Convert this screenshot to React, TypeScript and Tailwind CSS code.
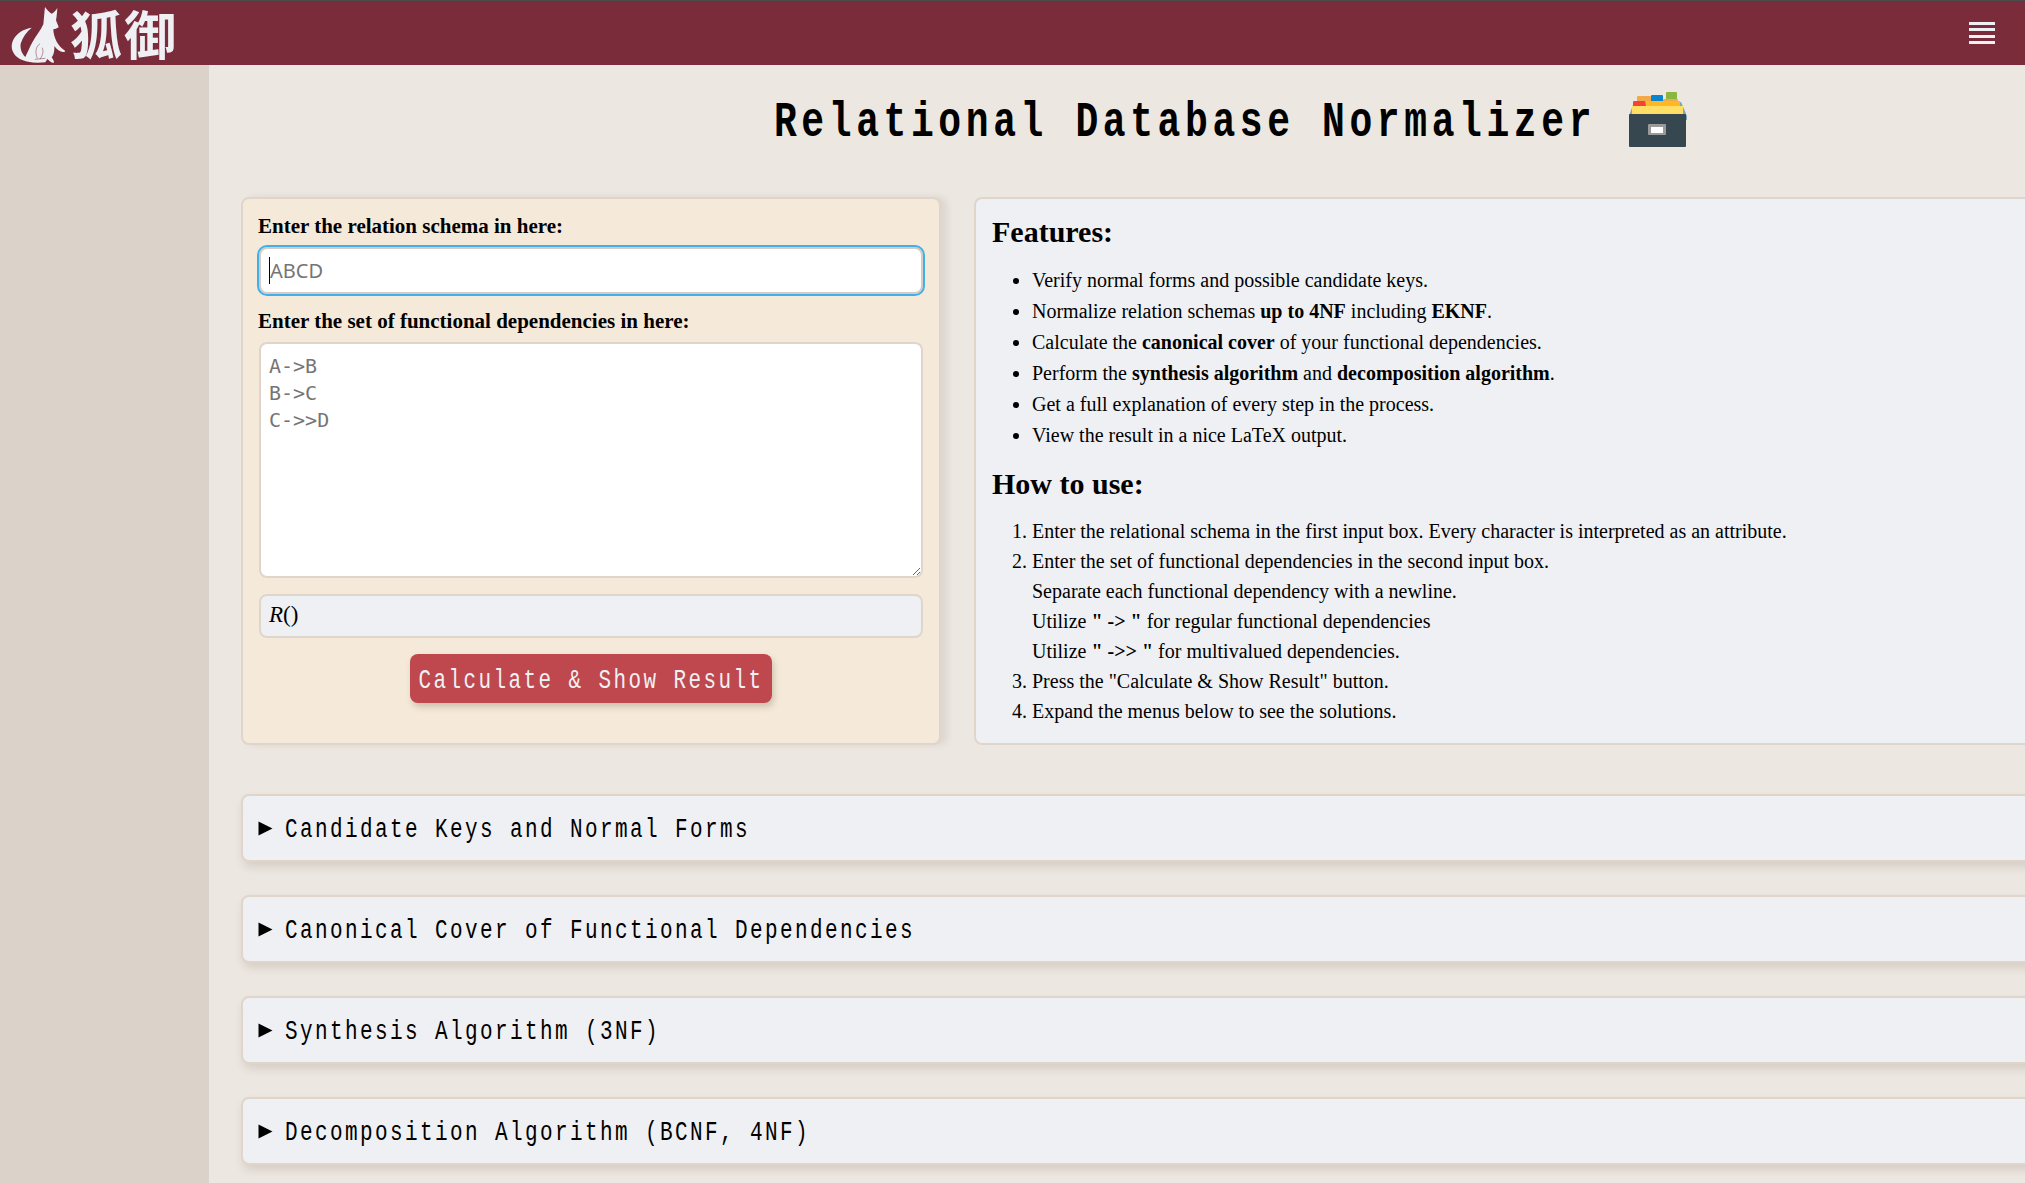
import React from 'react';

const serif = 'font-["Liberation_Serif",serif]';
const hand = 'font-["Liberation_Mono",monospace]';

const sections = [
  'Candidate Keys and Normal Forms',
  'Canonical Cover of Functional Dependencies',
  'Synthesis Algorithm (3NF)',
  'Decomposition Algorithm (BCNF, 4NF)',
];

function Fox() {
  return (
    <svg width="66" height="64" viewBox="0 0 198 192" className="shrink-0">
      <path
        fill="#eff0f4"
        d="M135 18 C142 28 148 34 155 38 C162 34 168 28 172 20 C171 36 170 48 168 58 C171 66 174 72 176 79 C170 83 165 84 160 85 C160 96 163 108 170 122 C176 132 184 142 195 149 C196 152 193 154 188 153 C178 151 170 145 163 135 C164 150 160 165 155 168 C158 174 162 178 162 185 C154 186 148 180 142 174 L136 184 C118 186 100 186 84 182 C60 178 42 166 36 145 C32 125 42 105 62 92 C72 86 84 81 95 80 C80 92 68 108 62 128 C60 144 66 158 76 168 C82 156 88 140 98 122 C108 104 122 88 130 70 C132 52 133 34 135 18 Z"
      />
      <path fill="none" stroke="#7b2c3b" strokeWidth="1.5" d="M120 128 C108 136 104 152 112 172 M126 140 C132 150 128 164 120 174 M104 175 L136 172" />
    </svg>
  );
}

function FileBox() {
  return (
    <svg width="60" height="56" viewBox="0 0 60 56" className="shrink-0">
      <path fill="#78a7b5" d="M6 10 H53 L59 24 V28 H1 V24 Z" />
      <rect x="9" y="4" width="14" height="8" rx="1" fill="#f2a94a" />
      <rect x="23" y="3" width="12" height="8" rx="1" fill="#0b84d0" />
      <rect x="38" y="0" width="11" height="8" rx="1" fill="#8bb63f" />
      <rect x="35" y="7" width="15" height="6" rx="1" fill="#f2a94a" />
      <rect x="5" y="9" width="13" height="9" rx="1" fill="#f44336" />
      <path fill="#ffb627" d="M17 9 H52 V18 H5 V14 H18 Z" />
      <rect x="4" y="14" width="51" height="9" fill="#ffdf66" />
      <rect x="1" y="22" width="57" height="33" rx="1" fill="#37474f" />
      <rect x="20" y="32" width="18" height="11" rx="1" fill="#9a9a9a" />
      <rect x="23" y="35" width="12" height="6" fill="#ffffff" />
    </svg>
  );
}

export default function App() {
  return (
    <div className={`h-[1183px] w-full overflow-hidden flex flex-col bg-[#ece7e1] text-black ${serif}`}>
      <header className="h-[65px] shrink-0 bg-[#7b2c3b] border-t border-[#4b4b4b] flex items-center justify-between pr-[30px]">
        <div className="flex items-center">
          <Fox />
          <span className='ml-[4px] text-[52px] leading-[60px] font-bold tracking-[2px] whitespace-nowrap text-[#eff0f4] font-["Noto_Sans_CJK_SC",sans-serif]'>狐御</span>
        </div>
        <button className="flex flex-col gap-[3.6px] w-[26px]">
          <span className="h-[3px] bg-[#eff0f4]" />
          <span className="h-[3px] bg-[#eff0f4]" />
          <span className="h-[3px] bg-[#eff0f4]" />
          <span className="h-[3px] bg-[#eff0f4]" />
        </button>
      </header>

      <div className="flex flex-1 min-h-0">
        <aside className="w-[209px] shrink-0 bg-[#dbd3ca]" />
        <main className="flex-1 min-w-0 overflow-hidden pl-[32px]">
          <div className="h-[132px] flex items-center justify-center gap-[32px] w-[1980px] pb-[22px]">
            <h1 className={`mt-[5px] text-[38px] tracking-[4.6px] leading-[60px] font-bold scale-y-[1.3] ${hand}`}>Relational Database Normalizer</h1>
            <FileBox />
          </div>

          <div className="flex items-start gap-[33px] w-[1900px]">
            <section className="w-[700px] h-[548px] shrink-0 rounded-lg border-2 border-[#dfd5cb] bg-[#f5ead9] shadow-[6px_0_6px_rgba(120,100,80,0.12)] px-[15px] pt-[13px]">
              <label className="block text-[21px] leading-[28px] font-bold">Enter the relation schema in here:</label>
              <div className="relative mt-[7px] mx-[1px]">
                <input
                  placeholder="ABCD"
                  className='block w-full h-[47px] rounded-lg border-2 border-[#d5cdc5] bg-white px-[9px] text-[20px] font-["Noto_Sans",sans-serif] placeholder:text-[#757575] outline-2 outline-[#3fb0ea]'
                />
                <span className="absolute left-[10px] top-[10px] w-[1px] h-[27px] bg-black" />
              </div>
              <label className="block mt-[13px] text-[21px] leading-[28px] font-bold">Enter the set of functional dependencies in here:</label>
              <div className="mx-[1px]">
                <textarea
                  placeholder={'A->B\nB->C\nC->>D'}
                  className='mt-[7px] block w-full h-[236px] rounded-lg border-2 border-[#dfd5cb] bg-white px-[8px] py-[9px] text-[20px] leading-[27px] font-["DejaVu_Sans_Mono",monospace] placeholder:text-[#757575] outline-none'
                />
                <div className="mt-[16px] h-[44px] rounded-lg border-2 border-[#dfd5cb] bg-[#eff0f4] px-[8px] pb-[2px] flex items-center text-[23px]">
                  <span className="italic">R</span>
                  <span>()</span>
                </div>
              </div>
              <div className="mt-[16px] flex justify-center">
                <button className={`w-[362px] h-[49px] rounded-lg bg-[#bf474e] text-[#eff0f4] text-[21px] tracking-[2.4px] shadow-[2px_4px_6px_rgba(120,100,80,0.3)] ${hand}`}>
                  <span className="inline-block scale-y-[1.35] translate-y-[2px]">Calculate &amp; Show Result</span>
                </button>
              </div>
            </section>

            <section className="w-[1160px] h-[548px] shrink-0 rounded-lg border-2 border-[#dfd5cb] bg-[#eff0f4] px-[16px] pt-[11px] text-[20px]">
              <h2 className="text-[30px] leading-[44px] font-bold">Features:</h2>
              <ul className="mt-[11px] list-disc pl-[40px] leading-[31px]">
                <li>Verify normal forms and possible candidate keys.</li>
                <li>Normalize relation schemas <b>up to 4NF</b> including <b>EKNF</b>.</li>
                <li>Calculate the <b>canonical cover</b> of your functional dependencies.</li>
                <li>Perform the <b>synthesis algorithm</b> and <b>decomposition algorithm</b>.</li>
                <li>Get a full explanation of every step in the process.</li>
                <li>View the result in a nice LaTeX output.</li>
              </ul>
              <h2 className="mt-[11px] text-[30px] leading-[44px] font-bold">How to use:</h2>
              <ol className="mt-[10px] list-decimal pl-[40px] leading-[30px]">
                <li>Enter the relational schema in the first input box. Every character is interpreted as an attribute.</li>
                <li>
                  Enter the set of functional dependencies in the second input box.
                  <br />Separate each functional dependency with a newline.
                  <br />Utilize <b>" -&gt; "</b> for regular functional dependencies
                  <br />Utilize <b>" -&gt;&gt; "</b> for multivalued dependencies.
                </li>
                <li>Press the "Calculate &amp; Show Result" button.</li>
                <li>Expand the menus below to see the solutions.</li>
              </ol>
            </section>
          </div>

          <div className="mt-[49px] flex flex-col gap-[33px] w-[1900px]">
            {sections.map(s => (
              <div key={s} className="h-[68px] rounded-lg border-2 border-[#dfd5cb] bg-[#eff0f4] shadow-[2px_5px_8px_rgba(120,100,80,0.18)] px-[15px] flex items-center gap-[12px]">
                <svg width="15" height="15" viewBox="0 0 15 15" className="shrink-0">
                  <path d="M0.5 0.5 L14.5 7.5 L0.5 14.5 Z" fill="#000" />
                </svg>
                <span className={`inline-block text-[21px] tracking-[2.4px] scale-y-[1.35] translate-y-[2px] ${hand}`}>{s}</span>
              </div>
            ))}
          </div>
        </main>
      </div>
    </div>
  );
}
